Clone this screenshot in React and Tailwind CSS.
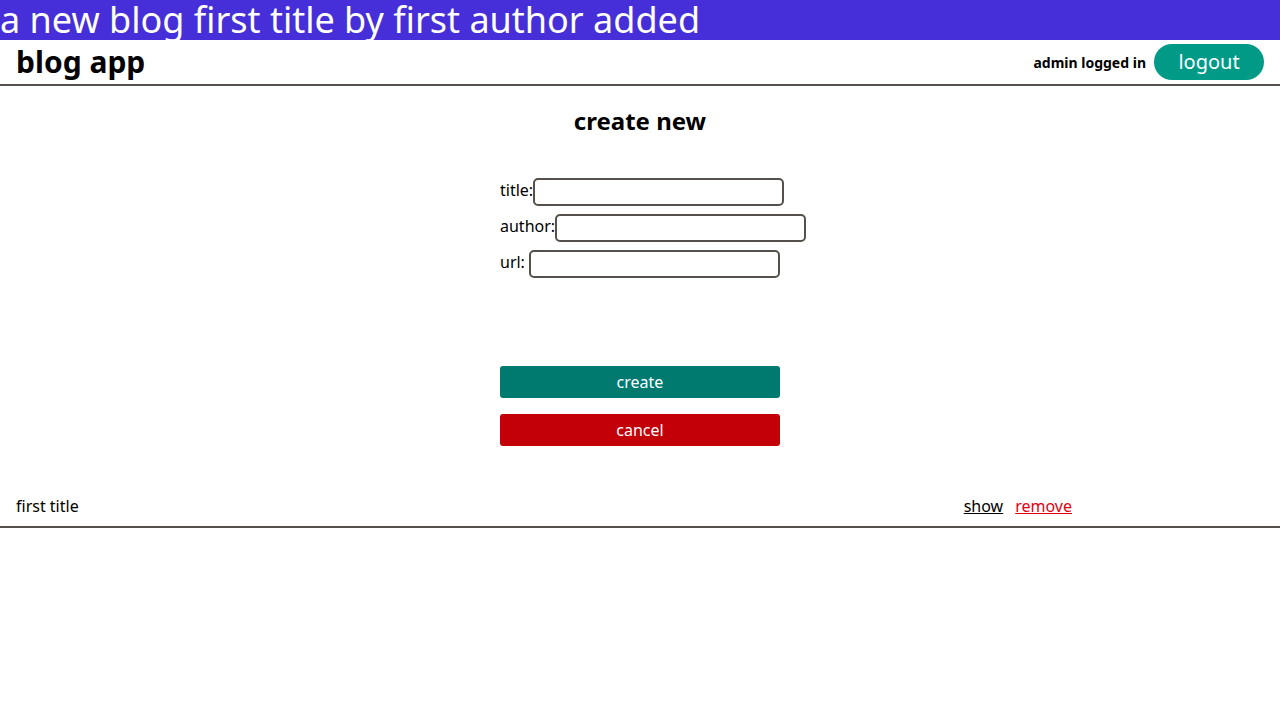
export default function App() {
  const font = { fontFamily: '"Noto Sans", sans-serif' };
  return (
    <div className="min-h-[720px] bg-white text-black font-['Noto_Sans',sans-serif]" style={font}>
      <div className="h-[40px] bg-[#462fd9] text-white text-[36px] leading-[40px] whitespace-nowrap">
        a new blog first title by first author added
      </div>
      <div className="flex items-center justify-between h-[46px] border-b-2 border-[#555049] pl-4 pr-4">
        <div className="text-[30px] font-bold leading-[42px]">blog app</div>
        <div className="flex items-center gap-2">
          <span className="text-[14px] font-bold">admin logged in</span>
          <button className="h-[36px] w-[110px] rounded-full bg-[#009a87] text-white text-[20px] leading-[36px]">logout</button>
        </div>
      </div>
      <div className="flex flex-col items-center">
        <h2 className="mt-[19px] text-[24px] font-bold leading-[32px]">create new</h2>
        <div className="w-[280px] mt-[41px] flex flex-col gap-[8px] text-[16px]">
          <div className="flex items-start h-[28px] whitespace-nowrap">
            <span className="leading-[24px]">title:</span>
            <input className="shrink-0 w-[251px] h-[28px] border-2 border-[#555049] rounded-[5px]" />
          </div>
          <div className="flex items-start h-[28px] whitespace-nowrap">
            <span className="leading-[24px]">author:</span>
            <input className="shrink-0 w-[251px] h-[28px] border-2 border-[#555049] rounded-[5px]" />
          </div>
          <div className="flex items-start h-[28px] whitespace-nowrap">
            <span className="mr-[4px] leading-[24px]">url:</span>
            <input className="shrink-0 w-[251px] h-[28px] border-2 border-[#555049] rounded-[5px]" />
          </div>
          <button className="mt-[80px] h-[32px] w-[280px] rounded-[3px] bg-[#00796e] text-white text-[16px]">create</button>
          <button className="mt-[8px] h-[32px] w-[280px] rounded-[3px] bg-[#c30008] text-white text-[16px]">cancel</button>
        </div>
      </div>
      <div className="mt-[44px] flex items-center justify-between h-[38px] pb-[4px] border-b-2 border-[#555049] pl-4 pr-[208px] text-[16px]">
        <span>first title</span>
        <div className="flex gap-3">
          <a className="underline text-black cursor-pointer">show</a>
          <a className="underline text-[#e00010] cursor-pointer">remove</a>
        </div>
      </div>
    </div>
  );
}
